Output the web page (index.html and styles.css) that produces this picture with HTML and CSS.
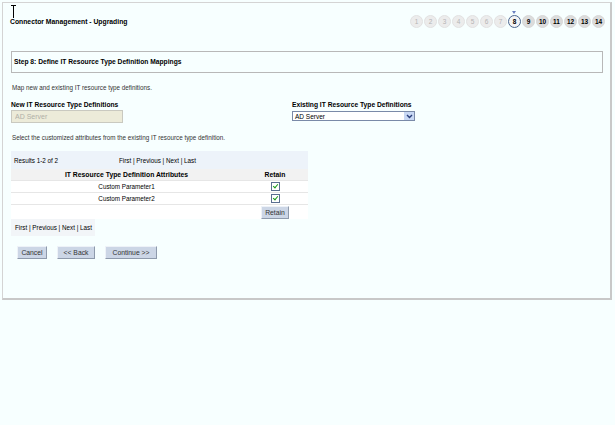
FILE: index.html
```html
<!DOCTYPE html>
<html lang="en">
<head>
    <meta charset="UTF-8">
    <title>Connector Management - Upgrading</title>
    <link rel="stylesheet" href="styles.css">
</head>
<body>

<div class="panel">
    <div class="top">
        <div class="title">Connector Management - Upgrading</div>
        <div class="steps">
            <span class="step done">1</span>
            <span class="step done">2</span>
            <span class="step done">3</span>
            <span class="step done">4</span>
            <span class="step done">5</span>
            <span class="step done">6</span>
            <span class="step done">7</span>
            <span class="step current">8</span>
            <span class="step">9</span>
            <span class="step">10</span>
            <span class="step">11</span>
            <span class="step">12</span>
            <span class="step">13</span>
            <span class="step">14</span>
        </div>
    </div>

    <div class="stepbox">Step 8: Define IT Resource Type Definition Mappings</div>

    <p class="hint">Map new and existing IT resource type definitions.</p>

    <div class="defs">
        <div class="def">
            <div class="label">New IT Resource Type Definitions</div>
            <input class="field" type="text" value="AD Server" disabled>
        </div>
        <div class="def">
            <div class="label">Existing IT Resource Type Definitions</div>
            <div class="select">
                <span>AD Server</span>
                <span class="arrow">
                    <svg width="7" height="5" viewBox="0 0 7 5"><path d="M1 1 L3.5 3.5 L6 1" fill="none" stroke="#2a3f7a" stroke-width="1.4"/></svg>
                </span>
            </div>
        </div>
    </div>

    <p class="hint second">Select the customized attributes from the existing IT resource type definition.</p>

    <div class="results">
        <div class="results-head">
            <span class="count">Results 1-2 of 2</span>
            <span class="pager">First | Previous | Next | Last</span>
        </div>
        <table class="attrs">
            <tr>
                <th class="name">IT Resource Type Definition Attributes</th>
                <th class="keep">Retain</th>
            </tr>
            <tr>
                <td>Custom Parameter1</td>
                <td class="keep"><span class="check"></span></td>
            </tr>
            <tr>
                <td>Custom Parameter2</td>
                <td class="keep"><span class="check"></span></td>
            </tr>
            <tr class="action">
                <td></td>
                <td class="keep"><button class="btn small">Retain</button></td>
            </tr>
        </table>
    </div>
    <div class="pager-bottom">First | Previous | Next | Last</div>

    <div class="actions">
        <button class="btn cancel">Cancel</button>
        <button class="btn back">&lt;&lt; Back</button>
        <button class="btn next">Continue &gt;&gt;</button>
    </div>
</div>

<div class="cursor"></div>

</body>
</html>
```

FILE: styles.css
```css
body {
    margin: 0;
    background: #f7ffff;
    font-family: "Liberation Sans", Arial, sans-serif;
    font-size: 6.7px;
    color: #000;
}

.panel {
    position: relative;
    margin: 2px 0 0 2px;
    width: 607px;
    height: 295px;
    border: 1px solid #d4d4d4;
    border-right: 2px solid #c8c8c8;
    border-bottom: 2px solid #c8c8c8;
    box-sizing: content-box;
}

.top {
    display: flex;
    justify-content: space-between;
    align-items: center;
    padding: 11px 5px 0 7px;
    height: 14px;
}

.title {
    font-weight: bold;
    font-size: 6.8px;
}

.steps {
    display: flex;
    gap: 1px;
}

.step {
    position: relative;
    width: 11px;
    height: 11px;
    border-radius: 50%;
    border: 1px solid #d8d8d8;
    background: #dcdcdc;
    font-weight: bold;
    font-size: 6.5px;
    line-height: 11px;
    text-align: center;
}

.step.done {
    background: #ececec;
    border-color: #e2e2e2;
    color: #b4b4b4;
    font-weight: normal;
}

.step.current {
    background: #f4f4f4;
    border-color: #4a6690;
}

.step.current::before {
    content: "";
    position: absolute;
    top: -5px;
    left: 3px;
    border-left: 2.5px solid transparent;
    border-right: 2.5px solid transparent;
    border-top: 3px solid #6a7fc0;
}

.stepbox {
    margin: 23px 7px 0 8px;
    height: 20px;
    line-height: 20px;
    border: 1px solid #b8b8b8;
    padding-left: 2px;
    font-weight: bold;
}

.hint {
    margin: 11px 0 0 9px;
    font-size: 6.3px;
    color: #333;
}

.defs {
    display: flex;
    margin: 10px 0 0 8px;
}

.def {
    width: 281px;
}

.label {
    font-weight: bold;
    line-height: 8px;
}

.field {
    display: block;
    margin: 1px 0 0;
    width: 112px;
    height: 13px;
    box-sizing: border-box;
    border: 1px solid #c9c9c0;
    background: #ecebd9;
    color: #b0b0a8;
    font-family: inherit;
    font-size: 7px;
    padding: 0 3px;
}

.select {
    display: flex;
    justify-content: space-between;
    align-items: center;
    margin-top: 2px;
    width: 123px;
    height: 10px;
    box-sizing: border-box;
    border: 1px solid #7a8aa8;
    background: #fff;
    padding-left: 2px;
    font-size: 6.5px;
}

.arrow {
    display: flex;
    align-items: center;
    justify-content: center;
    width: 10px;
    height: 8px;
    background: #c8d8f4;
}

.hint.second {
    margin-top: 11px;
}

.results {
    margin: 10px 0 0 8px;
    width: 297px;
    background: #fff;
}

.results-head {
    display: flex;
    align-items: center;
    height: 18px;
    background: #edf3fa;
    padding-left: 3px;
    font-size: 6.3px;
}

.count {
    width: 105px;
}

.attrs {
    width: 100%;
    border-collapse: collapse;
    font-size: 6.3px;
}

.attrs th {
    height: 11px;
    background: #f2f2f2;
    font-size: 6.8px;
    padding: 0;
}

.attrs td {
    height: 11px;
    padding: 0;
    text-align: center;
    border-top: 1px solid #e6e6e6;
}

.attrs .keep {
    width: 66px;
}

.check {
    display: inline-block;
    width: 7px;
    height: 7px;
    border: 1px solid #5a6f90;
    background: #fff;
    vertical-align: middle;
    position: relative;
}

.check::after {
    content: "";
    position: absolute;
    left: 2px;
    top: 0;
    width: 2px;
    height: 4px;
    border: solid #1a9a1a;
    border-width: 0 1.5px 1.5px 0;
    transform: rotate(40deg);
}

.action td {
    height: 14px;
}

.pager-bottom {
    display: inline-block;
    margin: 0 0 0 8px;
    padding: 5px 3px 5px 4px;
    background: #f2f5f8;
    font-size: 6.3px;
}

.actions {
    display: flex;
    gap: 10px;
    margin: 10px 0 0 14px;
}

.btn {
    height: 13px;
    padding: 0;
    background: #ccd6e6;
    border: 1px solid;
    border-color: #eef2f8 #8e9aac #8e9aac #eef2f8;
    font-family: inherit;
    font-size: 6.8px;
    color: #333;
}

.btn.cancel {
    width: 30px;
}

.btn.back {
    width: 38px;
}

.btn.next {
    width: 52px;
}

.btn.small {
    height: 13px;
    padding: 0 3px;
}

.cursor {
    position: absolute;
    top: 5px;
    left: 13px;
    width: 1px;
    height: 13px;
    background: #000;
}

.cursor::before {
    content: "";
    position: absolute;
    top: 0;
    left: -2px;
    width: 5px;
    height: 1px;
    background: #000;
}
```
